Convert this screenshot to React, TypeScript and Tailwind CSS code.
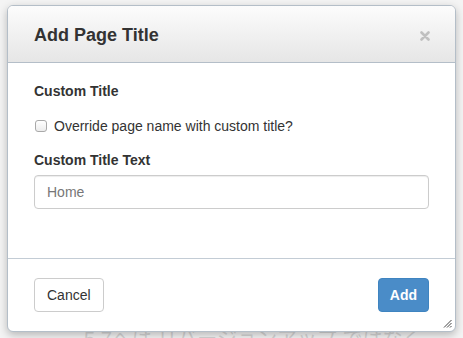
import { useState } from 'react';

export default function App() {
  const [checked, setChecked] = useState(false);
  const [title, setTitle] = useState('');

  return (
    <div
      className="relative h-[338px] w-[463px] overflow-hidden bg-[#f4f4f4]"
      style={{ fontFamily: '"Liberation Sans", Arial, sans-serif' }}
    >
      {/* faded page behind the dialog */}
      <div
        className="absolute left-[84px] top-[329px] text-[20px] leading-none text-[#d6d6d6]"
        style={{ fontFamily: '"Liberation Sans", "Noto Sans CJK JP", sans-serif' }}
      >
        5.7へは リバージョンアップ ではなく
      </div>

      <div className="relative ml-[7px] mt-[5px] flex h-[327px] w-[449px] flex-col overflow-hidden rounded-[6px] border border-[#b4bec8] bg-white shadow-[0_3px_9px_rgba(0,0,0,0.25)]">
        {/* header */}
        <div className="flex h-[57px] shrink-0 items-center justify-between border-b border-[#b4bec8] bg-gradient-to-b from-[#fcfcfc] to-[#e6e6e6] pl-[26px] pr-[25px] pt-[3px]">
          <h4 className="text-[18px] font-bold text-[#333]">Add Page Title</h4>
          <button className="text-[#c0c0c0]">
            <svg width="10" height="10" viewBox="0 0 10 10">
              <path d="M1.5 1.5 L8.5 8.5 M8.5 1.5 L1.5 8.5" stroke="currentColor" strokeWidth="2.6" strokeLinecap="round" />
            </svg>
          </button>
        </div>

        {/* body */}
        <div className="flex flex-1 flex-col px-[26px] pt-[18px] text-[14px] text-[#333]">
          <label className="font-bold leading-[20px]">Custom Title</label>
          <label className="mt-[15px] flex items-center gap-[7px] leading-[20px]">
            <input
              type="checkbox"
              checked={checked}
              onChange={(e) => setChecked(e.target.checked)}
              className="ml-[1px] h-[12px] w-[12px] appearance-none rounded-[3px] border border-[#a9a9a9] bg-gradient-to-b from-white to-[#ececec]"
            />
            Override page name with custom title?
          </label>
          <label className="mt-[14px] font-bold leading-[20px]">Custom Title Text</label>
          <input
            value={title}
            onChange={(e) => setTitle(e.target.value)}
            placeholder="Home"
            className="mt-[5px] h-[34px] w-full rounded-[4px] border border-[#cccccc] px-[12px] text-[14px] text-[#555] placeholder:text-[#777] shadow-[inset_0_1px_1px_rgba(0,0,0,0.075)] outline-none"
          />
        </div>

        {/* footer */}
        <div className="flex h-[73px] shrink-0 items-start justify-between border-t border-[#c3ccd5] px-[26px] pt-[19px] text-[14px]">
          <button className="h-[34px] rounded-[4px] border border-[#cccccc] bg-white px-[12px] text-[#333]">Cancel</button>
          <button className="h-[34px] rounded-[4px] border border-[#3f84c0] bg-[#4a8cc8] px-[11px] font-bold text-white">Add</button>
        </div>

        {/* resize grip */}
        <svg className="absolute bottom-[3px] right-[3px]" width="9" height="9" viewBox="0 0 9 9">
          <path d="M8.5 1 L1 8.5 M8.5 4 L4 8.5 M8.5 7 L7 8.5" stroke="#444" strokeWidth="1" />
        </svg>
      </div>
    </div>
  );
}
